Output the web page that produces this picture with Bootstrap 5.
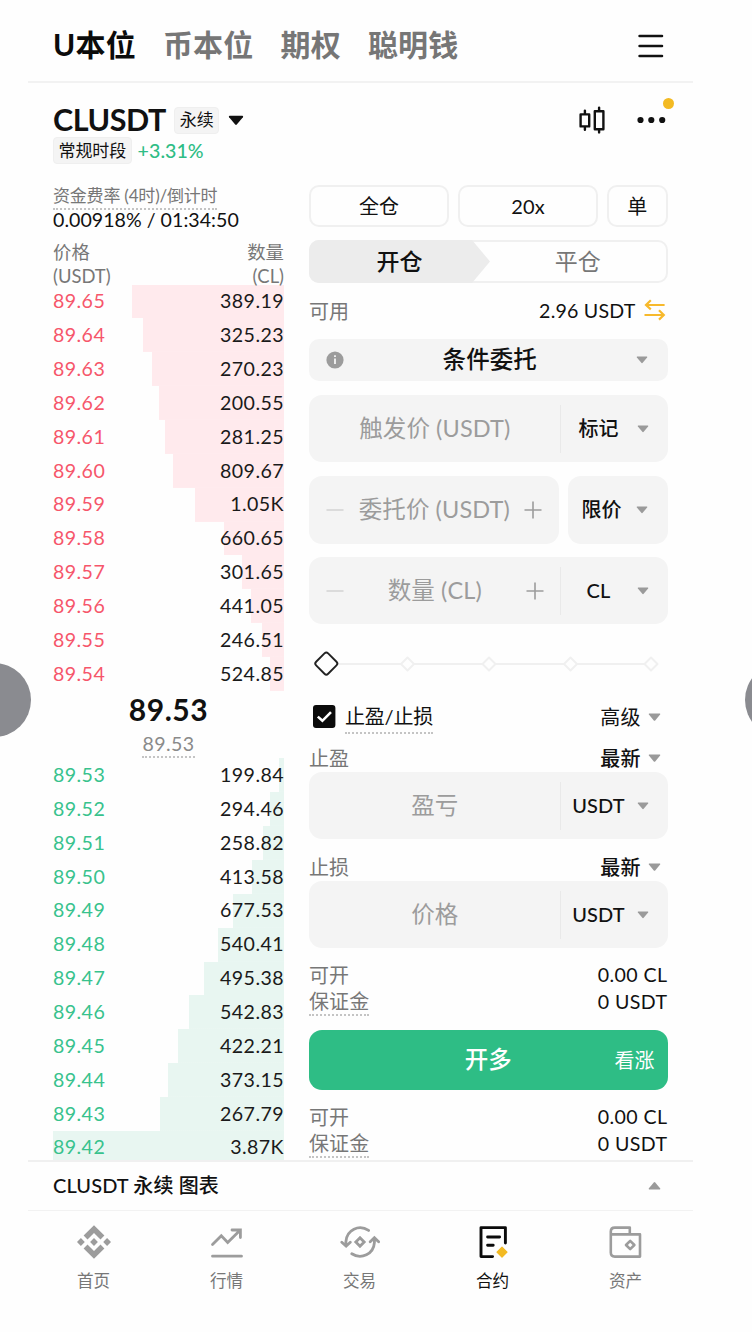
<!DOCTYPE html>
<html lang="zh-CN">
<head>
<meta charset="utf-8">
<meta name="viewport" content="width=device-width, initial-scale=1">
<title>CLUSDT 永续</title>
<link href="https://cdn.jsdelivr.net/npm/bootstrap@5.3.0/dist/css/bootstrap.min.css" rel="stylesheet">
<style>
body{font-family:Lato,"Noto Sans CJK SC",sans-serif;font-size:20px;line-height:1;color:#111;background:#fefefe;letter-spacing:.1px}
svg{display:block;flex:none}
.screen{height:1332px}
.app{width:665px;margin-left:28px}
.gutter{padding-left:25px;padding-right:25.5px}
.topbar{height:83px;border-bottom:2px solid #f2f2f2}
.topbar .nav-link{font-size:30px;font-weight:700;color:#767676;padding:6px 0 0;line-height:1;letter-spacing:.2px}
.topbar .nav-link.active{color:#0b0b0b}
.symbol{height:102px;padding-top:20px}
.pair{font-size:30.5px;font-weight:700;letter-spacing:-.45px;line-height:32px;padding-bottom:2px}
.chip{background:#f4f4f4;border:1px solid #efefef;border-radius:4px;font-size:17px;height:27px;padding:0 4.5px 1px;letter-spacing:-.1px}
.up{color:#2ebd85}
.dim{color:#777}
.dots{border-bottom:2px dotted #c4c4c4}
.book{width:231px;height:975px}
.num{font-size:19.6px;letter-spacing:.42px}
.num.tight{letter-spacing:.02px}
.lvl{height:33.87px;background:linear-gradient(var(--tone),var(--tone)) right/var(--w) 100% no-repeat}
.lvl span{padding-bottom:1px}
.lvl span:last-child{color:#1a1a1a}
.asks{--tone:#ffeaed}.asks .lvl span:first-child{color:#f6566b}
.bids{--tone:#e8f6f1}.bids .lvl span:first-child{color:#38c28d}
.form{width:358.5px}
.opt{height:42px;border:2px solid #f0f0f0;border-radius:10px;background:#fefefe;padding-bottom:1px}
.sides{height:43px;border:2px solid #f0f0f0;border-radius:10px;margin-top:13px;font-size:23px}
.side-open{width:181px;margin:-2px 0 -2px -2px;background:#ececec;clip-path:polygon(0 0,163px 0,181px 50%,163px 100%,0 100%);border-radius:10px 0 0 10px;font-weight:500}
.fieldbox{background:#f4f4f4;border-radius:13px;height:67px;font-size:23.5px;color:#9c9c9c}
.fieldbox.r2{height:67.5px}
.unit{width:107px;font-size:20px;font-weight:500;color:#111;position:relative}
.unit.cut::before{content:"";width:1px;height:48px;background:#e9e9e9;position:absolute;left:-1px}
.unit span{padding-bottom:1px}
.gap-f{margin-top:14px}
.line26{height:26px}.line27{height:27px}.line28{height:28px}
.line26 span,.line27 span,.line28 span{padding-bottom:1px}
.buy{height:60.5px;border-radius:13px;background:#2ebd85;color:#fff;margin-top:13.5px;border:0}
.chartbar{height:51px;border-top:2px solid #f0f0f0;border-bottom:1px solid #f2f2f2;font-size:20px;font-weight:500;padding-bottom:2px}
.tabs a{width:133px;color:#777;text-decoration:none;font-size:16.6px;letter-spacing:0}
.tabs a.on{color:#111}
.tabs span{margin-top:11.5px}
.bubble{position:absolute;width:74px;height:74px;border-radius:50%;background:#8a8b90;top:663px}
.alert-dot{position:absolute;width:11px;height:11px;border-radius:50%;background:#f3ba23;right:-8px;top:-18.5px}
</style>
</head>
<body>
<div class="screen position-relative overflow-hidden">
<div class="app">
  <header class="topbar gutter d-flex align-items-center justify-content-between">
    <nav class="nav" style="gap:27px">
      <a class="nav-link active" href="#">U本位</a>
      <a class="nav-link" href="#">币本位</a>
      <a class="nav-link" href="#">期权</a>
      <a class="nav-link" href="#">聪明钱</a>
    </nav>
    <svg width="26" height="26" viewBox="0 0 26 26" stroke="#111" stroke-width="2.6" stroke-linecap="round" style="margin:10px 3.5px 0 0"><path d="M1.6 3H24M1.6 13H24M1.6 23H24"/></svg>
  </header>

  <section class="symbol gutter">
    <div class="d-flex align-items-center" style="height:34px">
      <span class="pair">CLUSDT</span>
      <span class="chip d-flex align-items-center" style="margin-left:8.5px">永续</span>
      <svg width="16" height="11" viewBox="0 0 16 11" style="margin-left:9px"><path d="M1.6.8h12.8q1.3.2.5 1.4L8.8 9.6q-.8.8-1.6 0L1.1 2.2Q.3 1 1.6.8z" fill="#111"/></svg>
      <svg class="ms-auto" width="28" height="28" viewBox="0 0 28 28" fill="none" stroke="#111" stroke-width="2.4" stroke-linecap="round" stroke-linejoin="round"><path d="M2.6 8.4h8.6v12H2.6zM6.9 8.2V4.6M6.9 20.6v3.2M16.8 5.2h8.6v18h-8.6zM21.1 5V1.6M21.1 23.4v3"/></svg>
      <span class="position-relative" style="margin:0 2px 0 30.5px">
        <svg width="29" height="8" viewBox="0 0 29 8" fill="#111"><circle cx="3.5" cy="4" r="3.1"/><circle cx="14.3" cy="4" r="3.1"/><circle cx="25.2" cy="4" r="3.1"/></svg>
        <i class="alert-dot"></i>
      </span>
    </div>
    <div class="d-flex align-items-center" style="height:27px">
      <span class="chip d-flex align-items-center">常规时段</span>
      <span class="up num tight fw-medium" style="margin-left:6px">+3.31%</span>
    </div>
  </section>

  <main class="gutter d-flex justify-content-between">
    <section class="book overflow-hidden">
      <div class="d-flex"><span class="dim dots d-flex align-items-center" style="height:25px;font-size:17px;letter-spacing:-.2px;padding-bottom:2px">资金费率 (4时)/倒计时</span></div>
      <div class="num tight d-flex align-items-center" style="height:22px;padding-bottom:2px">0.00918% / 01:34:50</div>
      <div class="dim d-flex justify-content-between" style="height:52.6px;padding-top:8px;font-size:18.4px;line-height:24px;letter-spacing:0">
        <div>价格<br>(USDT)</div><div class="text-end">数量<br>(CL)</div>
      </div>
      <div class="asks num">
        <div class="lvl d-flex align-items-center justify-content-between" style="--w:152px"><span>89.65</span><span>389.19</span></div>
        <div class="lvl d-flex align-items-center justify-content-between" style="--w:141.4px"><span>89.64</span><span>325.23</span></div>
        <div class="lvl d-flex align-items-center justify-content-between" style="--w:132.3px"><span>89.63</span><span>270.23</span></div>
        <div class="lvl d-flex align-items-center justify-content-between" style="--w:125px"><span>89.62</span><span>200.55</span></div>
        <div class="lvl d-flex align-items-center justify-content-between" style="--w:119.2px"><span>89.61</span><span>281.25</span></div>
        <div class="lvl d-flex align-items-center justify-content-between" style="--w:111.2px"><span>89.60</span><span>809.67</span></div>
        <div class="lvl d-flex align-items-center justify-content-between" style="--w:89.5px"><span>89.59</span><span>1.05K</span></div>
        <div class="lvl d-flex align-items-center justify-content-between" style="--w:60px"><span>89.58</span><span>660.65</span></div>
        <div class="lvl d-flex align-items-center justify-content-between" style="--w:42px"><span>89.57</span><span>301.65</span></div>
        <div class="lvl d-flex align-items-center justify-content-between" style="--w:33.5px"><span>89.56</span><span>441.05</span></div>
        <div class="lvl d-flex align-items-center justify-content-between" style="--w:22px"><span>89.55</span><span>246.51</span></div>
        <div class="lvl d-flex align-items-center justify-content-between" style="--w:14.5px"><span>89.54</span><span>524.85</span></div>
      </div>
      <div class="d-flex flex-column align-items-center" style="height:67.5px">
        <div class="fw-bold d-flex align-items-center" style="height:39px;font-size:30px;letter-spacing:.6px;padding-bottom:2px">89.53</div>
        <div class="num dots d-flex align-items-center" style="height:30.5px;color:#8a8a8a;padding-top:2px">89.53</div>
      </div>
      <div class="bids num">
        <div class="lvl d-flex align-items-center justify-content-between" style="--w:5.5px"><span>89.53</span><span>199.84</span></div>
        <div class="lvl d-flex align-items-center justify-content-between" style="--w:14px"><span>89.52</span><span>294.46</span></div>
        <div class="lvl d-flex align-items-center justify-content-between" style="--w:21px"><span>89.51</span><span>258.82</span></div>
        <div class="lvl d-flex align-items-center justify-content-between" style="--w:32px"><span>89.50</span><span>413.58</span></div>
        <div class="lvl d-flex align-items-center justify-content-between" style="--w:51px"><span>89.49</span><span>677.53</span></div>
        <div class="lvl d-flex align-items-center justify-content-between" style="--w:66px"><span>89.48</span><span>540.41</span></div>
        <div class="lvl d-flex align-items-center justify-content-between" style="--w:80px"><span>89.47</span><span>495.38</span></div>
        <div class="lvl d-flex align-items-center justify-content-between" style="--w:95px"><span>89.46</span><span>542.83</span></div>
        <div class="lvl d-flex align-items-center justify-content-between" style="--w:106.5px"><span>89.45</span><span>422.21</span></div>
        <div class="lvl d-flex align-items-center justify-content-between" style="--w:116.5px"><span>89.44</span><span>373.15</span></div>
        <div class="lvl d-flex align-items-center justify-content-between" style="--w:124.5px"><span>89.43</span><span>267.79</span></div>
        <div class="lvl d-flex align-items-center justify-content-between" style="--w:231px"><span>89.42</span><span>3.87K</span></div>
      </div>
    </section>

    <section class="form">
      <div class="d-flex" style="gap:9px">
        <div class="opt d-flex align-items-center justify-content-center" style="width:140px">全仓</div>
        <div class="opt d-flex align-items-center justify-content-center" style="width:140px">20x</div>
        <div class="opt d-flex align-items-center justify-content-center flex-fill">单</div>
      </div>
      <div class="sides d-flex">
        <div class="side-open d-flex align-items-center justify-content-center">开仓</div>
        <div class="dim d-flex align-items-center justify-content-center flex-fill">平仓</div>
      </div>
      <div class="d-flex align-items-center" style="height:38px;margin:9px 0">
        <span class="dim ps-0">可用</span><span class="ms-auto num" style="letter-spacing:.2px">2.96 USDT</span>
        <svg width="22" height="22" viewBox="0 0 22 22" fill="none" stroke="#f7b92c" stroke-width="2.2" style="margin:0 2px 2px 8px"><path d="M20.6 6H1.8M6.8 1.2 2 6l4.8 4.4M.5 16H19.8M15 11.2l4.8 4.8-4.8 4.6"/></svg>
      </div>
      <div class="fieldbox d-flex align-items-center" style="height:42px;border-radius:10px;padding:0 20px 0 17px">
        <svg width="18" height="18" viewBox="0 0 18 18"><circle cx="9" cy="9" r="8.6" fill="#9c9c9c"/><path d="M9 4.2v1.9M9 7.4V13" stroke="#f4f4f4" stroke-width="1.8"/></svg>
        <span class="flex-fill text-center fw-medium" style="color:#111">条件委托</span>
        <svg width="12" height="8" viewBox="0 0 12 8" fill="#9a9a9a"><path d="M1.2.4h9.6q1 .2.3 1.1L6.7 6.8q-.7.7-1.4 0L.9 1.5Q.2.6 1.2.4z"/></svg>
      </div>
      <div class="fieldbox gap-f d-flex align-items-center">
        <span class="flex-fill text-center">触发价 (USDT)</span>
        <div class="unit cut d-flex align-items-center"><span class="text-center" style="width:76px">标记</span><svg width="12" height="8" viewBox="0 0 12 8" fill="#9a9a9a"><path d="M1.2.4h9.6q1 .2.3 1.1L6.7 6.8q-.7.7-1.4 0L.9 1.5Q.2.6 1.2.4z"/></svg></div>
      </div>
      <div class="gap-f d-flex" style="gap:9px">
        <div class="fieldbox r2 flex-fill d-flex align-items-center justify-content-between" style="padding:0 16px 0 17px">
          <svg width="18" height="18" viewBox="0 0 18 18" stroke="#d5d5d5" stroke-width="1.6"><path d="M.5 9h17"/></svg>
          <span>委托价 (USDT)</span>
          <svg width="18" height="18" viewBox="0 0 18 18" stroke="#9c9c9c" stroke-width="1.6"><path d="M.5 9h17M9 .5v17"/></svg>
        </div>
        <div class="fieldbox r2 unit d-flex align-items-center" style="width:100px;font-size:20px;color:#111"><span class="text-center" style="width:68px">限价</span><svg width="12" height="8" viewBox="0 0 12 8" fill="#9a9a9a"><path d="M1.2.4h9.6q1 .2.3 1.1L6.7 6.8q-.7.7-1.4 0L.9 1.5Q.2.6 1.2.4z"/></svg></div>
      </div>
      <div class="fieldbox d-flex align-items-center" style="margin-top:13.5px">
        <div class="flex-fill d-flex align-items-center justify-content-between" style="padding:0 17px">
          <svg width="18" height="18" viewBox="0 0 18 18" stroke="#d5d5d5" stroke-width="1.6"><path d="M.5 9h17"/></svg>
          <span>数量 (CL)</span>
          <svg width="18" height="18" viewBox="0 0 18 18" stroke="#9c9c9c" stroke-width="1.6"><path d="M.5 9h17M9 .5v17"/></svg>
        </div>
        <div class="unit cut d-flex align-items-center"><span class="text-center" style="width:76px">CL</span><svg width="12" height="8" viewBox="0 0 12 8" fill="#9a9a9a"><path d="M1.2.4h9.6q1 .2.3 1.1L6.7 6.8q-.7.7-1.4 0L.9 1.5Q.2.6 1.2.4z"/></svg></div>
      </div>
      <div class="d-flex align-items-center" style="height:80px">
        <svg width="358" height="30" viewBox="0 0 358 30" fill="#fefefe" stroke="#f0f0f0" stroke-width="1.9" stroke-linejoin="round">
          <path d="M29 15h306"/>
          <path d="M98.5 8.5l6.5 6.5-6.5 6.5-6.5-6.5zM180 8.5l6.5 6.5-6.5 6.5-6.5-6.5zM261.500 8.500l6.500 6.500-6.500 6.500-6.500-6.500zM342 8.500l6.500 6.500-6.500 6.500-6.500-6.500z"/>
          <rect x="8.800" y="6.100" width="17" height="17" rx="2.600" transform="rotate(45 17.300 14.600)" stroke="#222"/>
        </svg>
      </div>
      <div class="line26 d-flex align-items-center">
        <svg width="23" height="23" viewBox="0 0 23 23" style="margin:0 9px 1px 4px"><rect width="22.4" height="23" rx="3" fill="#0b0b0b"/><path d="M4.8 11.6l4.6 4.2 8.6-8.6" fill="none" stroke="#fff" stroke-width="2.6"/></svg>
        <span class="dots d-flex align-items-center" style="height:34px;letter-spacing:-.2px">止盈/止损</span>
        <span class="ms-auto">高级</span>
        <svg width="13" height="9" viewBox="0 0 13 9" fill="#9a9a9a" style="margin:0 7px 0 7px"><path d="M1.2.4h10.6q1 .2.3 1.1L7.2 7.4q-.7.7-1.4 0L.9 1.5Q.2.6 1.2.4z"/></svg>
      </div>
      <div class="line28 gap-f d-flex align-items-center">
        <span class="dim">止盈</span><span class="ms-auto fw-medium">最新</span>
        <svg width="13" height="9" viewBox="0 0 13 9" fill="#9a9a9a" style="margin:0 7px 0 7px"><path d="M1.2.4h10.6q1 .2.3 1.1L7.2 7.4q-.7.7-1.4 0L.9 1.5Q.2.6 1.2.4z"/></svg>
      </div>
      <div class="fieldbox d-flex align-items-center">
        <span class="flex-fill text-center">盈亏</span>
        <div class="unit cut d-flex align-items-center"><span class="text-center" style="width:76px">USDT</span><svg width="12" height="8" viewBox="0 0 12 8" fill="#9a9a9a"><path d="M1.2.4h9.6q1 .2.3 1.1L6.7 6.8q-.7.7-1.4 0L.9 1.5Q.2.6 1.2.4z"/></svg></div>
      </div>
      <div class="line28 gap-f d-flex align-items-center">
        <span class="dim">止损</span><span class="ms-auto fw-medium">最新</span>
        <svg width="13" height="9" viewBox="0 0 13 9" fill="#9a9a9a" style="margin:0 7px 0 7px"><path d="M1.2.4h10.6q1 .2.3 1.1L7.2 7.4q-.7.7-1.4 0L.9 1.5Q.2.6 1.2.4z"/></svg>
      </div>
      <div class="fieldbox d-flex align-items-center">
        <span class="flex-fill text-center">价格</span>
        <div class="unit cut d-flex align-items-center"><span class="text-center" style="width:76px">USDT</span><svg width="12" height="8" viewBox="0 0 12 8" fill="#9a9a9a"><path d="M1.2.4h9.6q1 .2.3 1.1L6.7 6.8q-.7.7-1.4 0L.9 1.5Q.2.6 1.2.4z"/></svg></div>
      </div>
      <div class="line27 gap-f d-flex align-items-center justify-content-between"><span class="dim">可开</span><span class="num">0.00 CL</span></div>
      <div class="line27 d-flex align-items-center justify-content-between"><span class="dim dots d-flex align-items-center h-100">保证金</span><span class="num">0 USDT</span></div>
      <button class="buy w-100 d-flex align-items-center position-relative justify-content-center p-0">
        <span class="fw-medium" style="font-size:23.5px">开多</span>
        <span class="position-absolute end-0" style="padding-right:13px">看涨</span>
      </button>
      <div class="line27 gap-f d-flex align-items-center justify-content-between"><span class="dim">可开</span><span class="num">0.00 CL</span></div>
      <div class="line27 d-flex align-items-center justify-content-between"><span class="dim dots d-flex align-items-center h-100">保证金</span><span class="num">0 USDT</span></div>
    </section>
  </main>

  <div class="chartbar gutter d-flex align-items-center justify-content-between">
    <span>CLUSDT 永续 图表</span>
    <svg width="13" height="9" viewBox="0 0 13 9" fill="#9a9a9a" style="margin-right:7px"><path d="M1.2 8.4h10.6q1-.2.3-1.1L7.2 1.4q-.7-.7-1.4 0L.9 7.3Q.2 8.2 1.2 8.4z"/></svg>
  </div>

  <nav class="tabs d-flex" style="padding-top:10.5px;margin-left:-1px">
    <a class="d-flex flex-column align-items-center" href="#">
      <svg width="40" height="40" viewBox="0 0 40 40" fill="#9c9c9c"><path d="M20 3.2l10.400 10.400-3.900 3.900L20 11l-6.500 6.500-3.900-3.900zM20 36.800L9.600 26.400l3.900-3.900L20 29l6.500-6.500 3.900 3.900zM6.900 16.100l3.900 3.900-3.900 3.900L3 20zM33.100 16.100L37 20l-3.900 3.900-3.900-3.900zM20 16.100l3.900 3.900-3.900 3.900-3.900-3.900z"/></svg>
      <span>首页</span>
    </a>
    <a class="d-flex flex-column align-items-center" href="#">
      <svg width="40" height="40" viewBox="0 0 40 40" fill="none" stroke="#9c9c9c" stroke-width="2.8" stroke-linecap="round"><path d="M5.500 34.200h29M5.500 22.600l8.800-8.800 6.400 6.600L32.800 8.400M25 8h8.400v7.600"/></svg>
      <span>行情</span>
    </a>
    <a class="d-flex flex-column align-items-center" href="#">
      <svg width="40" height="40" viewBox="0 0 40 40" fill="none" stroke="#9c9c9c" stroke-width="2.8" stroke-linecap="round"><path d="M28.600 8.400C19 1.800 6.600 8 5.900 19.600v3.800M1.800 20.200l4.300 4 4.200-4M11.800 31.800C21.400 38 33.600 32 34.400 20.600v-3.800M30.200 19.800l4.200-4 4.200 4M20 15.800l4.200 4.200-4.200 4.200-4.200-4.200z"/></svg>
      <span>交易</span>
    </a>
    <a class="on d-flex flex-column align-items-center" href="#">
      <svg width="40" height="40" viewBox="0 0 40 40" fill="none" stroke="#0b0b0b" stroke-width="2.9" stroke-linecap="round" stroke-linejoin="round"><path d="M32.400 21V5.600H8V34.600H19.600M14.600 15h12M14.600 23.200h5.600"/><path d="M29 25.200l5 5-5 5-5-5z" fill="#f3ba23" stroke="#f3ba23" stroke-width="1.2"/></svg>
      <span>合约</span>
    </a>
    <a class="d-flex flex-column align-items-center" href="#">
      <svg width="40" height="40" viewBox="0 0 40 40" fill="none" stroke="#9c9c9c" stroke-width="2.6" stroke-linejoin="round"><path d="M4.800 12.400V30.600q0 4 4 4H34V12.400zM4.800 12.400V9.600q0-4 4-4h15v6.800"/><path d="M24.200 18.800l4.200 4.200-4.200 4.200L20 23z"/></svg>
      <span>资产</span>
    </a>
  </nav>
</div>
<i class="bubble" style="left:-43px"></i>
<i class="bubble" style="left:745px"></i>
</div>
<script src="https://cdn.jsdelivr.net/npm/bootstrap@5.3.0/dist/js/bootstrap.bundle.min.js"></script>
</body>
</html>
